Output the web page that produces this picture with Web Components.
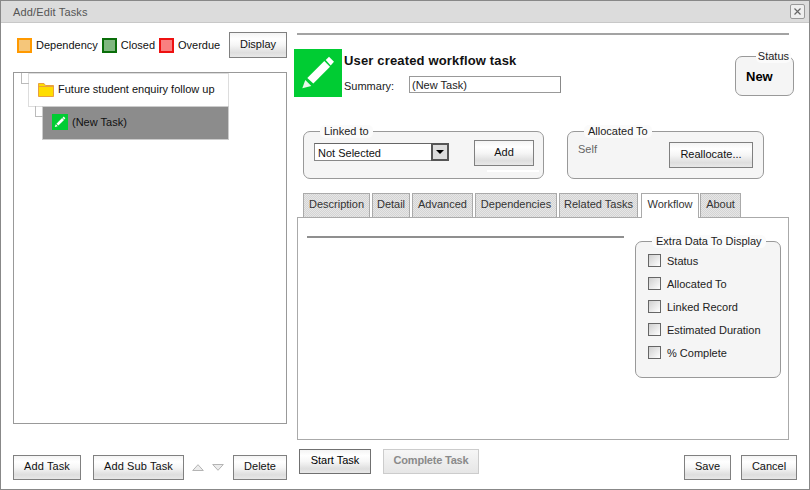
<!DOCTYPE html>
<html><head><meta charset="utf-8"><style>
html,body{margin:0;padding:0;background:#fff}
body{font:11px "Liberation Sans",Arial,sans-serif;color:#000;width:810px;height:490px;overflow:hidden}
</style></head><body>
<task-window heading="Add/Edit Tasks"></task-window>
<template id="t-page">
<style>
:host{display:block}
.leg{display:flex;align-items:center;height:26px;padding-left:4px}
.leg legend-key{margin-right:4px}
.leg x-btn{margin-left:auto}
tree-panel{margin-top:14px;height:352px}
.lb{display:flex;align-items:flex-start;margin-top:31px}
.lb x-btn+x-btn{margin-left:12px}
.arrows{display:flex;gap:8px;margin:0 9px 0 8px;padding-top:9px}
.line{height:2px;background:#a3a3a3;margin:1px 8px 0 0}
.hdr{display:flex;margin:14px 0 0 -3px;height:48px}
.pic{width:48px;height:48px;background:#00cc33;flex:none}
.pic svg{display:block}
.ht{margin-left:2px;display:flex;flex-direction:column}
.ht b{font-size:13px;line-height:15px;margin-top:4px;color:#111;letter-spacing:.16px}
.sr{display:flex;margin-top:8px;align-items:flex-start}
.sr span{width:65px;padding-top:4px;color:#222}
.sr div{box-sizing:border-box;width:152px;height:17px;border:1px solid #999;padding:1px 2px;line-height:14px;color:#222;border-right-color:#888}
.st{margin:7px 3px 0 auto;width:59px;height:40px}
.st b{display:block;font-size:13px;margin:12px 0 0 10px;line-height:15px}
.gr{display:flex;margin:34px 0 0 6px;gap:23px}
.row1{display:flex;align-items:flex-start;padding:11px 0 0 10px}
.row1 x-btn{margin:-3px 0 0 25px}
.wl{position:absolute;left:13px;top:30px;width:52px;height:2px;background:#fff}
.row2{display:flex;align-items:flex-start;padding:10px 0 0 10px}
.row2 span{color:#666;width:91px;line-height:13px;margin-top:1px}
.tabs{display:flex;gap:2px;margin:14px 0 0 6px;height:24px;position:relative;z-index:1}
.panel{box-sizing:border-box;height:223px;margin-right:8px;border:1px solid #aaa;display:flex;padding:18px 9px 0 9px;align-items:flex-start}
.pl{height:2px;background:#8f8f8f;width:317px;flex:none}
.ex{margin:5px 0 0 11px;width:145px;height:137px;flex:none}
.chks{display:flex;flex-direction:column;gap:10px;padding:12px 0 0 12px}
.rb{display:flex;margin-top:9px;align-items:flex-start;padding-left:2px;height:31px}
.rb x-btn{flex:none}
</style>
<task-main>
<div slot="left">
  <div class="leg">
    <legend-key color="#ff9900" fill="#f5c67a">Dependency</legend-key>
    <legend-key color="#0a6e0a" fill="#7fb77f">Closed</legend-key>
    <legend-key color="#ee1111" fill="#f98080">Overdue</legend-key>
    <x-btn w="58" h="26">Display</x-btn>
  </div>
  <tree-panel>
    <tree-node indent="14" kind="folder">Future student enquiry follow up</tree-node>
    <tree-node indent="28" kind="task" selected>(New Task)</tree-node>
  </tree-panel>
  <div class="lb">
    <x-btn w="68" h="25" style="letter-spacing:.1px">Add Task</x-btn>
    <x-btn w="91" h="25" style="letter-spacing:.1px">Add Sub Task</x-btn>
    <div class="arrows">
      <svg width="12" height="7" viewBox="0 0 12 7"><path d="M6 .7 11.300 6.500H.7z" fill="#ececec" stroke="#b4b4b4"/></svg>
      <svg width="12" height="7" viewBox="0 0 12 7"><path d="M.7 .5H11.300L6 6.300z" fill="#ececec" stroke="#b4b4b4"/></svg>
    </div>
    <x-btn w="54" h="25">Delete</x-btn>
  </div>
</div>
<div slot="right">
  <div class="line"></div>
  <div class="hdr">
    <div class="pic"><svg width="48" height="48" viewBox="0 0 48 48"><path d="M8.300 39.300 11.300 31 17.300 37z" fill="#e8f8ea"/><path d="M13.300 29 30.300 12 36 17.700 19.300 34.600z" fill="#fff"/><path d="M31.700 11 35 7.700 40 12.700 36.700 16.500z" fill="#fff"/></svg></div>
    <div class="ht"><b>User created workflow task</b><div class="sr"><span>Summary:</span><div>(New Task)</div></div></div>
    <group-box class="st" label="Status" right><b>New</b></group-box>
  </div>
  <div class="gr">
    <group-box label="Linked to" style="width:241px;height:48px"><div class="row1"><x-select>Not Selected</x-select><x-btn w="60" h="26">Add<i class="wl"></i></x-btn></div></group-box>
    <group-box label="Allocated To" style="width:197px;height:48px"><div class="row2"><span>Self</span><x-btn w="84" h="26">Reallocate...</x-btn></div></group-box>
  </div>
  <div class="tabs">
    <x-tab w="67">Description</x-tab><x-tab w="38">Detail</x-tab><x-tab w="61">Advanced</x-tab><x-tab w="82">Dependencies</x-tab><x-tab w="79" style="margin-right:1px">Related Tasks</x-tab><x-tab w="58" active>Workflow</x-tab><x-tab w="41" style="margin-left:-1px">About</x-tab>
  </div>
  <div class="panel">
    <div class="pl"></div>
    <group-box class="ex" label="Extra Data To Display" style="width:146px">
      <div class="chks"><x-check>Status</x-check><x-check>Allocated To</x-check><x-check>Linked Record</x-check><x-check>Estimated Duration</x-check><x-check>% Complete</x-check></div>
    </group-box>
  </div>
  <div class="rb">
    <x-btn w="72" h="25" strong>Start Task</x-btn>
    <x-btn w="96" h="25" disabled style="margin-left:12px">Complete Task</x-btn>
    <x-btn w="47" h="25" style="margin:6px 0 0 auto">Save</x-btn>
    <x-btn w="56" h="25" style="margin:6px 0 0 10px">Cancel</x-btn>
  </div>
</div>
</task-main>
</template>
<script>
const def=(name,html,setup)=>customElements.define(name,class extends HTMLElement{
  constructor(){super();this.attachShadow({mode:'open'}).innerHTML=html;}
  connectedCallback(){setup&&setup(this,this.shadowRoot)}
});
def('task-window',`<style>
:host{display:block;box-sizing:border-box;width:810px;height:490px;border:1px solid #888;background:#fff}
.bar{box-sizing:border-box;height:22px;background:#dcdcdc;border-bottom:1px solid #c8c8c8;display:flex;align-items:center;padding:0 4px 0 12px;color:#555;font-size:11px;letter-spacing:.15px}
.x{margin-left:auto;box-sizing:border-box;width:15px;height:15px;border:1px solid #999;border-radius:2px;background:#eee;display:block}
</style><div class="bar"><span id="h"></span><svg class="x" viewBox="0 0 13 13"><path d="M3.500 3.500 9.500 9.500M9.500 3.500 3.500 9.500" stroke="#666" stroke-width="1.200" fill="none"/></svg></div><div id="c"></div>`,(el,s)=>{
  s.getElementById('h').textContent=el.getAttribute('heading');
  const c=s.getElementById('c');
  if(!c.firstChild)c.appendChild(document.getElementById('t-page').content.cloneNode(true));
});
def('task-main',`<style>
:host{display:flex;padding:9px 12px 0 12px;gap:10px}
.l{width:274px;flex:none}.r{flex:1;min-width:0}
</style><div class="l"><slot name="left"></slot></div><div class="r"><slot name="right"></slot></div>`);
def('x-btn',`<style>
:host{display:inline-block;position:relative;flex:none}
.b{box-sizing:border-box;display:flex;align-items:center;justify-content:center;height:100%;border:1px solid #808080;background:linear-gradient(#f4f4f4 0,#fff 25%,#f6f6f6 50%,#dedede 82%,#e8e8e8);color:#111;padding-bottom:3px;white-space:nowrap}
:host([strong]) .b{border:1.500px solid #707070;color:#000}
:host([disabled]) .b{border:1px solid #ccc;color:#8a8a8a;font-weight:bold;letter-spacing:-.2px;background:linear-gradient(#f6f6f6,#e6e6e6)}
</style><div class="b"><slot></slot></div>`,(el)=>{el.style.width=el.getAttribute('w')+'px';el.style.height=el.getAttribute('h')+'px'});
def('legend-key',`<style>
:host{display:flex;align-items:center;color:#111}
i{box-sizing:border-box;width:15px;height:15px;border:2px solid var(--c);background:var(--f);margin-right:4px;display:block}
</style><i></i><slot></slot>`,(el)=>{el.style.setProperty('--c',el.getAttribute('color'));el.style.setProperty('--f',el.getAttribute('fill'))});
def('tree-panel',`<style>
:host{display:block;box-sizing:border-box;border:1px solid #999;background:#fff;overflow:hidden}
</style><slot></slot>`);
def('tree-node',`<style>
:host{display:block;position:relative;box-sizing:border-box;height:34px;width:201px;border:1px solid #ddd;background:#fff;margin-bottom:-1px;color:#111}
:host([selected]){background:#8c8c8c;border-color:#ccc;width:187px}
:host::before{content:"";position:absolute;left:-8px;top:-1px;width:7px;height:10px;border-left:1px solid #bbb;border-bottom:1px solid #bbb}
.in{display:flex;align-items:center;height:100%;gap:4px;padding:0 0 2px 9px;box-sizing:border-box}
svg{display:block;flex:none}
</style><div class="in"><span id="i" style="display:block"></span><slot></slot></div>`,(el,s)=>{
  el.style.marginLeft=el.getAttribute('indent')+'px';
  s.getElementById('i').innerHTML=el.getAttribute('kind')==='folder'
   ?'<svg width="16" height="15" viewBox="0 0 16 15"><path d="M.5 14.500V1.500H6L7.500 3.500H15.500V14.500Z" fill="#ffdd00" stroke="#e8a040"/><path d="M1 4.500H15" stroke="#e8a040"/></svg>'
   :'<svg width="16" height="16" viewBox="0 0 48 48"><rect width="48" height="48" fill="#00cc33"/><path d="M8.300 39.300 11.300 31 17.300 37z" fill="#fff"/><path d="M13.300 29 30.300 12 36 17.700 19.300 34.600z" fill="#fff"/><path d="M31.700 11 35 7.700 40 12.700 36.700 16.500z" fill="#fff"/></svg>';
});
def('group-box',`<style>
:host{display:block;box-sizing:border-box;border:1px solid #999;border-radius:7px;background:#f5f5f5;position:relative}
.lg{position:absolute;left:16px;top:-7px;padding:0 4px;background:#fbfbfb;border-radius:5px;line-height:13px;color:#222;white-space:nowrap}
:host([right]) .lg{left:auto;right:2px;padding:0 2px}
</style><div class="lg"></div><slot></slot>`,(el,s)=>{s.querySelector('.lg').textContent=el.getAttribute('label')});
def('x-select',`<style>
:host{display:flex;box-sizing:border-box;width:135px;height:18px;flex:none}
.v{flex:1;background:#fff;border:1px solid #888;border-right:0;border-top-color:#666;padding:3px 0 0 3px;line-height:13px;color:#111}
.a{box-sizing:border-box;width:18px;border:2px solid #555;background:#ddd;display:flex;align-items:center;justify-content:center}
.a svg{display:block}
</style><div class="v"><slot></slot></div><div class="a"><svg width="8" height="4" viewBox="0 0 8 4"><path d="M0 0H8L4 4z" fill="#000"/></svg></div>`);
def('x-tab',`<style>
:host{display:block;box-sizing:border-box;height:24px;border:1px solid #aaa;border-bottom:0;color:#333;text-align:center;line-height:21px;white-space:nowrap;flex:none;background:repeating-conic-gradient(#d4d4d4 0 25%,#e6e6e6 0 50%) 0 0/2px 2px}
:host([active]){background:#fff;height:25px}
</style><slot></slot>`,(el)=>{el.style.width=el.getAttribute('w')+'px'});
def('x-check',`<style>
:host{display:flex;align-items:center;height:13px;color:#222}
i{box-sizing:border-box;width:13px;height:13px;border:1px solid #666;margin-right:6px;background:linear-gradient(135deg,#cfcfcf,#fff);flex:none}
</style><i></i><slot></slot>`);
</script>
</body></html>
